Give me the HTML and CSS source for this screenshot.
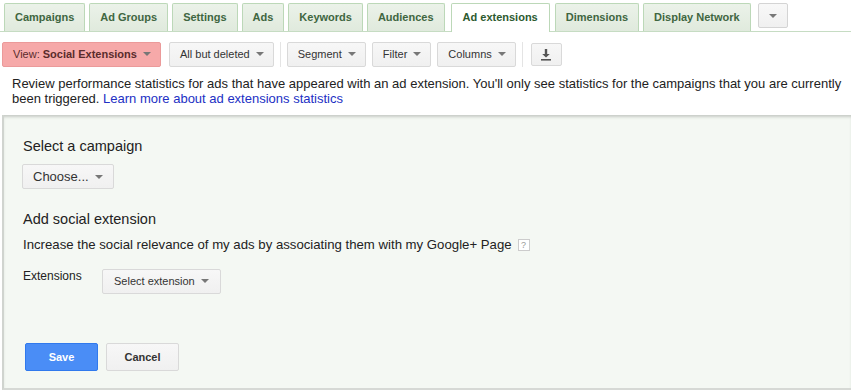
FILE: index.html
```html
<!DOCTYPE html>
<html>

<head>
    <title>Ad extensions</title>
    <link rel="stylesheet" href="styles.css">
</head>

<body>
    <div class="tabs">
        <div class="tab">Campaigns</div>
        <div class="tab">Ad Groups</div>
        <div class="tab">Settings</div>
        <div class="tab">Ads</div>
        <div class="tab">Keywords</div>
        <div class="tab">Audiences</div>
        <div class="tab active">Ad extensions</div>
        <div class="tab">Dimensions</div>
        <div class="tab">Display Network</div>
        <div class="tab-more"><span class="arrow"></span></div>
    </div>

    <div class="toolbar">
        <div class="btn view">View: <b>Social Extensions</b> <span class="arrow"></span></div>
        <div class="btn">All but deleted <span class="arrow"></span></div>
        <div class="sep"></div>
        <div class="btn">Segment <span class="arrow"></span></div>
        <div class="btn">Filter <span class="arrow"></span></div>
        <div class="btn">Columns <span class="arrow"></span></div>
        <div class="sep"></div>
        <div class="btn icon">
            <svg width="12" height="13" viewBox="0 0 12 13">
                <path d="M4.8 1h2.4v5h2.6L6 9.6 2.2 6h2.6z" fill="#555"/>
                <rect x="1" y="11" width="10" height="1.6" fill="#555"/>
            </svg>
        </div>
    </div>

    <p class="intro">Review performance statistics for ads that have appeared with an ad extension. You'll only see statistics for the campaigns that you are currently<br>
        been triggered. <a href="#">Learn more about ad extensions statistics</a></p>

    <div class="panel">
        <h3>Select a campaign</h3>
        <div class="btn choose">Choose... <span class="arrow"></span></div>

        <h3 class="second">Add social extension</h3>
        <p class="hint">Increase the social relevance of my ads by associating them with my Google+ Page <span class="help">?</span></p>

        <div class="field">
            <span class="label">Extensions</span>
            <div class="btn small">Select extension <span class="arrow"></span></div>
        </div>

        <div class="actions">
            <div class="btn save">Save</div>
            <div class="btn cancel">Cancel</div>
        </div>
    </div>
</body>

</html>
```

FILE: styles.css
```css
body {
    font-family: "Liberation Sans", Arial, sans-serif;
    margin: 0;
    width: 851px;
    height: 392px;
    overflow: hidden;
    color: #222;
    background: #fff;
}

.tabs {
    display: flex;
    align-items: flex-start;
    gap: 4px;
    padding: 3px 0 0 4px;
    height: 28px;
    border-bottom: 1px solid #c6dcc3;
    white-space: nowrap;
}

.tab {
    height: 27px;
    line-height: 27px;
    padding: 0 10px;
    font-size: 11px;
    font-weight: bold;
    color: #3f6641;
    background: linear-gradient(#ebf2e9, #e0eadd);
    border: 1px solid #bcd8b8;
    border-bottom: none;
    border-radius: 2px 2px 0 0;
}

.tab.active {
    background: #fff;
    color: #2d5a2f;
    height: 28px;
    margin-bottom: -1px;
    padding: 0 11px;
    margin-left: 2px;
    margin-right: 1px;
}

.tab-more {
    margin-left: 3px;
    width: 28px;
    height: 23px;
    border: 1px solid #d4d4d4;
    border-radius: 2px;
    background: linear-gradient(#f8f8f8, #f0f0f0);
    display: flex;
    align-items: center;
    justify-content: center;
}

.arrow {
    display: inline-block;
    width: 0;
    height: 0;
    border-left: 4px solid transparent;
    border-right: 4px solid transparent;
    border-top: 4px solid #777;
    vertical-align: middle;
    margin-left: 3px;
    margin-top: -2px;
}

.tab-more .arrow {
    margin: 0;
}

.toolbar {
    display: flex;
    align-items: center;
    gap: 6px;
    padding: 9px 0 0 2px;
    height: 26px;
}

.btn {
    height: 23px;
    line-height: 23px;
    padding: 0 9px 0 10px;
    font-size: 11px;
    color: #333;
    background: linear-gradient(#f7f7f7, #f0f0f0);
    border: 1px solid #d9d9d9;
    border-radius: 2px;
    white-space: nowrap;
}

.toolbar .btn.view {
    background: #f6a9a9;
    border-color: #eb9a9a;
    color: #5a2c2c;
    padding: 0 9px 0 10px;
    margin-right: 2px;
}

.toolbar .btn.icon {
    width: 31px;
    padding: 0;
    box-sizing: border-box;
    display: flex;
    align-items: center;
    justify-content: center;
    margin-left: 2px;
}

.btn.icon svg {
    flex-shrink: 0;
}

.sep {
    width: 1px;
    height: 25px;
    background: #e4e4e4;
    margin: 0;
}

.intro {
    margin: 9px 0 0 12px;
    font-size: 13px;
    line-height: 15px;
    white-space: nowrap;
    height: 30px;
    color: #222;
}

.intro a {
    color: #2230c4;
    text-decoration: none;
}

.panel {
    margin: 9px 0 0 2px;
    background: #f4f8f3;
    border-left: 2px solid #d0d4cf;
    border-bottom: 2px solid #d6d9d5;
    box-shadow: inset 0 3px 3px -1px #c7cbc6;
    padding: 22px 0 0 19px;
    box-sizing: border-box;
    height: 275px;
}

.panel h3 {
    font-size: 14.5px;
    font-weight: normal;
    margin: 0;
    line-height: 18px;
    color: #222;
}

.panel h3.second {
    margin-top: 21px;
}

.btn.choose {
    display: inline-block;
    margin-top: 9px;
    padding: 0 10px;
    font-size: 13px;
    color: #333;
    margin-left: -1px;
}

.hint {
    margin: 9px 0 0;
    font-size: 13.2px;
    line-height: 15px;
    display: flex;
    align-items: center;
    gap: 4px;
}

.help {
    display: inline-block;
    width: 10px;
    height: 10px;
    line-height: 10px;
    font-size: 9px;
    text-align: center;
    color: #999;
    border: 1px solid #ccc;
    background: #fff;
    margin-left: 2px;
}

.field {
    display: flex;
    align-items: flex-start;
    margin-top: 17px;
}

.label {
    font-size: 12px;
    width: 79px;
    padding-top: 0;
}

.btn.small {
    font-size: 11px;
    padding: 0 11px;
    color: #333;
}

.actions {
    display: flex;
    gap: 8px;
    margin-top: 49px;
    margin-left: 2px;
}

.btn.save,
.btn.cancel {
    width: 71px;
    height: 26px;
    line-height: 26px;
    padding: 0;
    text-align: center;
    font-size: 11px;
    font-weight: bold;
}

.btn.save {
    background: #4a8df6;
    border-color: #3079ed;
    color: #fff;
}

.btn.cancel {
    color: #333;
}
```
